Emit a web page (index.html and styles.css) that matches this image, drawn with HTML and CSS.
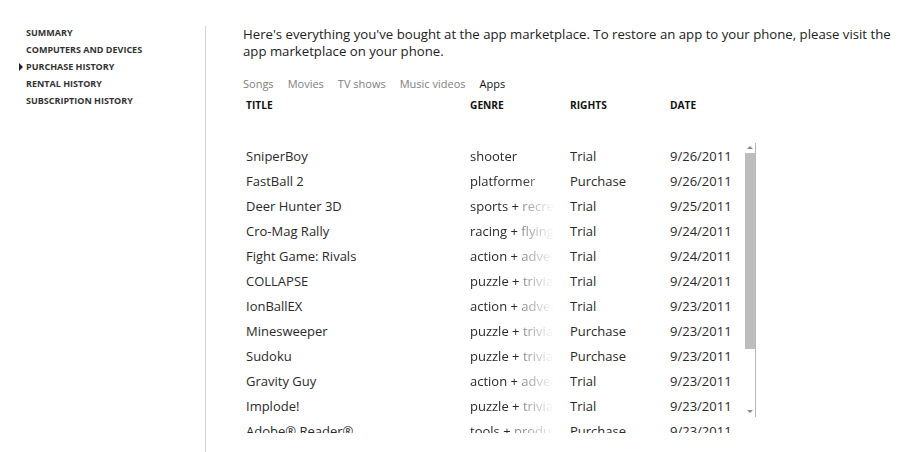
FILE: index.html
```html
<!DOCTYPE html>
<html lang="en">
<head>
    <meta charset="UTF-8">
    <title>Purchase history</title>
    <link rel="stylesheet" href="styles.css">
</head>
<body>
    <div class="page">
        <!-- account navigation -->
        <ul class="nav">
            <li>Summary</li>
            <li>Computers and devices</li>
            <li class="current">Purchase history</li>
            <li>Rental history</li>
            <li>Subscription history</li>
        </ul>
        <div class="divider"></div>

        <section class="main">
            <p class="intro">Here's everything you've bought at the app marketplace. To restore an app to your phone, please visit the app marketplace on your phone.</p>

            <div class="tabs">
                <span>Songs</span>
                <span>Movies</span>
                <span>TV shows</span>
                <span>Music videos</span>
                <span class="active">Apps</span>
            </div>

            <div class="row head">
                <span class="title">Title</span>
                <span class="genre">Genre</span>
                <span class="rights">Rights</span>
                <span class="date">Date</span>
            </div>

            <div class="listwrap">
                <div class="list">
                    <div class="row"><span class="title">SniperBoy</span><span class="genre">shooter</span><span class="rights">Trial</span><span class="date">9/26/2011</span></div>
                    <div class="row"><span class="title">FastBall 2</span><span class="genre">platformer</span><span class="rights">Purchase</span><span class="date">9/26/2011</span></div>
                    <div class="row"><span class="title">Deer Hunter 3D</span><span class="genre">sports + <em>recreation</em></span><span class="rights">Trial</span><span class="date">9/25/2011</span></div>
                    <div class="row"><span class="title">Cro-Mag Rally</span><span class="genre">racing + <em>flying</em></span><span class="rights">Trial</span><span class="date">9/24/2011</span></div>
                    <div class="row"><span class="title">Fight Game: Rivals</span><span class="genre">action + <em>adventure</em></span><span class="rights">Trial</span><span class="date">9/24/2011</span></div>
                    <div class="row"><span class="title">COLLAPSE</span><span class="genre">puzzle + <em>trivia</em></span><span class="rights">Trial</span><span class="date">9/24/2011</span></div>
                    <div class="row"><span class="title">IonBallEX</span><span class="genre">action + <em>adventure</em></span><span class="rights">Trial</span><span class="date">9/23/2011</span></div>
                    <div class="row"><span class="title">Minesweeper</span><span class="genre">puzzle + <em>trivia</em></span><span class="rights">Purchase</span><span class="date">9/23/2011</span></div>
                    <div class="row"><span class="title">Sudoku</span><span class="genre">puzzle + <em>trivia</em></span><span class="rights">Purchase</span><span class="date">9/23/2011</span></div>
                    <div class="row"><span class="title">Gravity Guy</span><span class="genre">action + <em>adventure</em></span><span class="rights">Trial</span><span class="date">9/23/2011</span></div>
                    <div class="row"><span class="title">Implode!</span><span class="genre">puzzle + <em>trivia</em></span><span class="rights">Trial</span><span class="date">9/23/2011</span></div>
                    <div class="row"><span class="title">Adobe® Reader®</span><span class="genre">tools + <em>productivity</em></span><span class="rights">Purchase</span><span class="date">9/23/2011</span></div>
                </div>

                <!-- scrollbar -->
                <div class="scrollbar">
                    <span class="arrow up"></span>
                    <span class="thumb"></span>
                    <span class="arrow down"></span>
                </div>
            </div>
        </section>
    </div>
</body>
</html>
```

FILE: styles.css
```css
body {
    margin: 0;
    font-family: 'Open Sans', sans-serif;
    color: #2a2a2a;
    background: #fff;
}

.page {
    display: flex;
    height: 452px;
}

.nav {
    list-style: none;
    margin: 0;
    padding: 24px 0 0 26px;
    width: 179px;
    font-size: 9px;
    font-weight: 700;
    text-transform: uppercase;
    line-height: 17px;
    color: #333;
}

.nav li.current {
    position: relative;
}

.nav li.current::before {
    content: "";
    position: absolute;
    left: -7px;
    top: 5px;
    border-left: 4px solid #222;
    border-top: 4px solid transparent;
    border-bottom: 4px solid transparent;
}

.divider {
    width: 1px;
    margin-top: 26px;
    background: #d4d4d4;
}

.main {
    padding: 26px 0 0 37px;
    flex: 1;
}

.intro {
    margin: 0;
    font-size: 13.2px;
    line-height: 17px;
    color: #222;
}

.tabs {
    display: flex;
    gap: 14px;
    margin-top: 17px;
    font-size: 11px;
    line-height: 14px;
    color: #808080;
}

.tabs .active {
    color: #111;
}

.row {
    display: flex;
    padding-left: 3px;
    height: 25px;
    align-items: center;
    font-size: 13px;
    white-space: nowrap;
}

.row.head {
    margin-top: 6px;
    height: 16px;
    font-size: 10.2px;
    font-weight: 700;
    text-transform: uppercase;
    color: #111;
}

.title {
    width: 224px;
    flex-shrink: 0;
}

.genre {
    width: 84px;
    flex-shrink: 0;
    margin-right: 16px;
    overflow: hidden;
    -webkit-mask-image: linear-gradient(to right, #000 62%, transparent 100%);
    mask-image: linear-gradient(to right, #000 62%, transparent 100%);
}

.row.head .genre {
    -webkit-mask-image: none;
    mask-image: none;
}

.genre em {
    font-style: normal;
    color: #8a8a8a;
}

.rights {
    width: 100px;
    flex-shrink: 0;
}

.date {
    width: 75px;
    flex-shrink: 0;
}

.listwrap {
    display: flex;
    margin-top: 30px;
}

.list {
    height: 290px;
    overflow: hidden;
}

.scrollbar {
    display: flex;
    flex-direction: column;
    align-items: center;
    width: 10px;
    height: 274px;
    border-right: 1px solid #b8b8b8;
}

.thumb {
    width: 10px;
    height: 196px;
    margin: 4px 0 auto;
    background: #bdbdbd;
}

.arrow {
    margin-top: 3px;
    border-left: 3px solid transparent;
    border-right: 3px solid transparent;
}

.arrow.up {
    border-bottom: 3px solid #8a8a8a;
}

.arrow.down {
    margin-bottom: 4px;
    border-top: 3px solid #8a8a8a;
}
```
